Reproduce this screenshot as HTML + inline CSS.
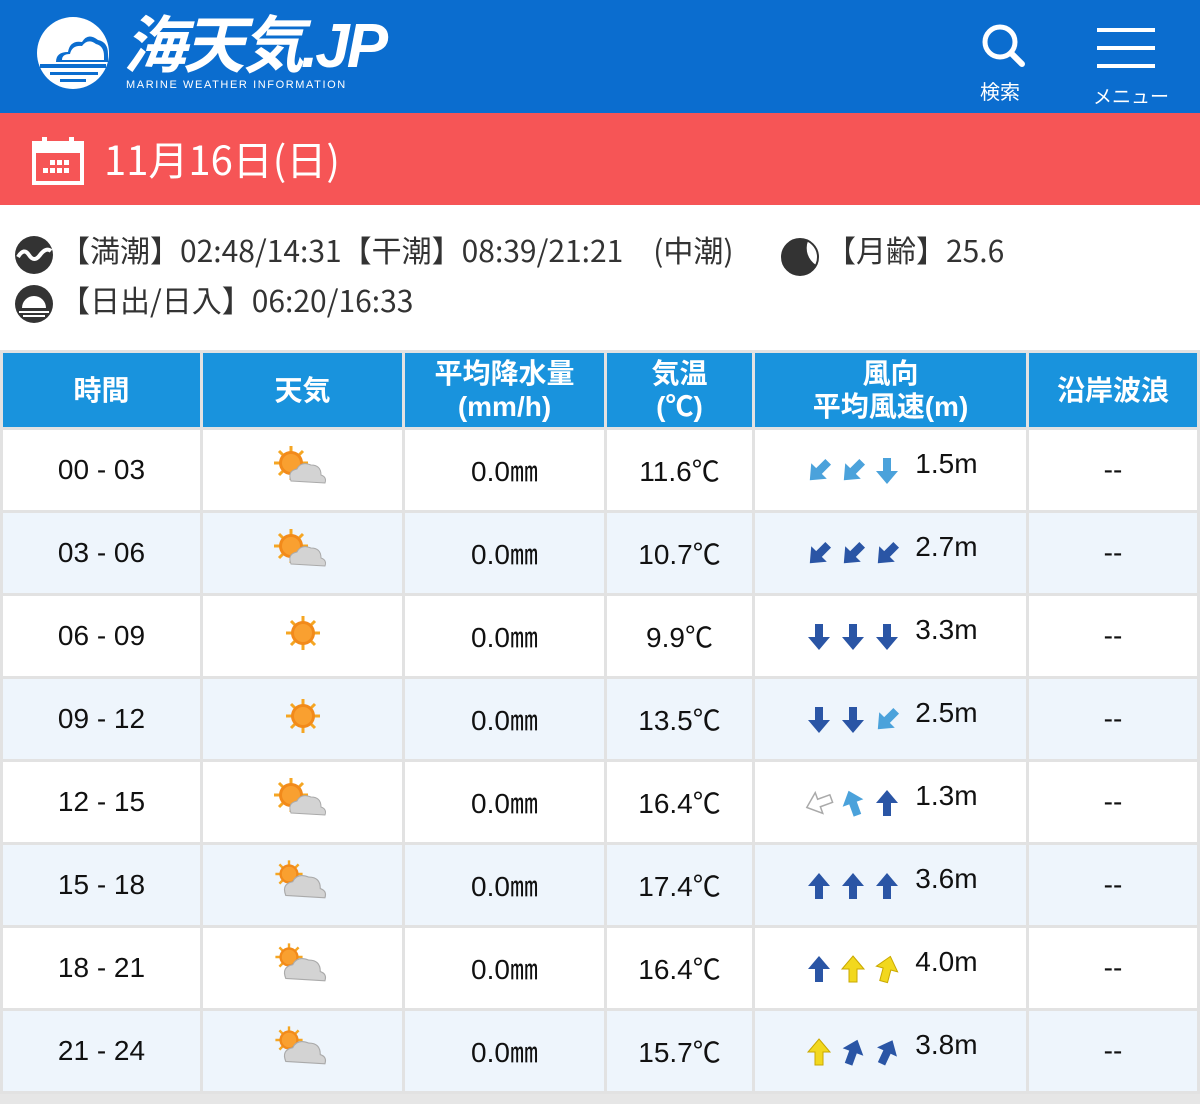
<!DOCTYPE html>
<html><head><meta charset="utf-8"><style>
*{margin:0;padding:0;box-sizing:border-box}
body{width:1200px;height:1104px;background:#e6e6e6;font-family:"Liberation Sans","Noto Sans CJK JP",sans-serif;overflow:hidden;position:relative}
.hdr{position:absolute;left:0;top:0;width:1200px;height:113px;background:#0b6dcf;color:#fff}
.red{position:absolute;left:0;top:113px;width:1200px;height:92px;background:#f65556;color:#fff}
.info{position:absolute;left:0;top:205px;width:1200px;height:147px;background:#fff;font-size:30px;color:#333;font-family:"Noto Sans CJK JP",sans-serif}
table{position:absolute;left:0;top:350px;width:1200px;border-collapse:collapse}
td,th{border:3px solid #e2e2e2;text-align:center;font-size:28px;color:#111;font-weight:normal}
th{background:#1993dd;color:#fff;height:77px;line-height:33px;font-weight:bold;font-size:28px}
td{height:83px}
tr.alt td{background:#eef5fc}
tr.w td{background:#fff}
.ar{display:inline-block;vertical-align:middle}
</style></head><body>
<div class="hdr">
 <svg width="80" height="80" viewBox="0 0 80 80" style="position:absolute;left:36px;top:16px">
  <circle cx="37" cy="37" r="36" fill="#fff"/>
  <path d="M20 46 Q20 36 32 36 Q34 24 46 26 Q52 16 62 24 Q72 26 72 38 L72 46Z" fill="#0b6dcf"/>
  <path d="M26 44 Q26 38 34 38 Q36 29 46 30 Q52 22 60 28 Q68 30 68 40 L68 44Z" fill="#fff"/>
  <rect x="4" y="48" width="66" height="4" fill="#0b6dcf"/><rect x="14" y="56" width="48" height="3" fill="#0b6dcf"/><rect x="24" y="63" width="26" height="3" fill="#0b6dcf"/>
 </svg>
 <div style="position:absolute;left:124px;top:12px;font-size:62px;font-weight:bold;font-style:italic;letter-spacing:-3px;line-height:70px">海天気.JP</div>
 <div style="position:absolute;left:126px;top:79px;font-size:11px;letter-spacing:1.6px">MARINE WEATHER INFORMATION</div>
 <svg width="46" height="46" viewBox="0 0 46 46" style="position:absolute;left:980px;top:22px"><circle cx="20" cy="20" r="15" fill="none" stroke="#fff" stroke-width="5"/><path d="M31 31 L42 42" stroke="#fff" stroke-width="6" stroke-linecap="round"/></svg>
 <div style="position:absolute;left:980px;top:76px;font-size:20px">検索</div>
 <div style="position:absolute;left:1097px;top:28px;width:58px;height:4px;background:#fff"></div>
 <div style="position:absolute;left:1097px;top:46px;width:58px;height:4px;background:#fff"></div>
 <div style="position:absolute;left:1097px;top:64px;width:58px;height:4px;background:#fff"></div>
 <div style="position:absolute;left:1093px;top:82px;font-size:19px">メニュー</div>
</div>
<div class="red">
 <svg width="52" height="50" viewBox="0 0 52 50" style="position:absolute;left:32px;top:22px"><rect x="2" y="8" width="48" height="40" fill="none" stroke="#fff" stroke-width="4"/><rect x="2" y="8" width="48" height="10" fill="#fff"/><rect x="10" y="2" width="5" height="10" fill="#fff"/><rect x="37" y="2" width="5" height="10" fill="#fff"/><g fill="#fff"><rect x="18" y="25" width="5" height="5"/><rect x="25" y="25" width="5" height="5"/><rect x="32" y="25" width="5" height="5"/><rect x="11" y="33" width="5" height="5"/><rect x="18" y="33" width="5" height="5"/><rect x="25" y="33" width="5" height="5"/><rect x="32" y="33" width="5" height="5"/></g></svg>
 <div style="position:absolute;left:104px;top:18px;font-size:40px;line-height:54px;font-family:'Noto Sans CJK JP',sans-serif">11月16日(日)</div>
</div>
<div class="info">
 <svg width="40" height="40" viewBox="0 0 40 40" style="position:absolute;left:14px;top:30px"><circle cx="20" cy="20" r="19" fill="#333"/><path d="M4 22 Q10 12 15 20 T26 20 T37 16" fill="none" stroke="#fff" stroke-width="4"/></svg>
 <div style="position:absolute;left:60px;top:22px">【満潮】02:48/14:31【干潮】08:39/21:21　(中潮)</div>
 <svg width="40" height="40" viewBox="0 0 40 40" style="position:absolute;left:780px;top:32px"><circle cx="20" cy="20" r="18" fill="#fff" stroke="#333" stroke-width="2"/><path d="M28 4 A18 18 0 1 0 36 28 A20 20 0 0 1 28 4Z" fill="#333"/></svg>
 <div style="position:absolute;left:826px;top:22px">【月齢】25.6</div>
 <svg width="40" height="40" viewBox="0 0 40 40" style="position:absolute;left:14px;top:79px"><circle cx="20" cy="20" r="19" fill="#333"/><path d="M8 24 A12 12 0 0 1 32 24Z" fill="#fff"/><path d="M5 28 H35 M9 32 H31" stroke="#fff" stroke-width="2"/></svg>
 <div style="position:absolute;left:60px;top:72px">【日出/日入】06:20/16:33</div>
</div>
<svg width="0" height="0" style="position:absolute"><defs>
<path id="a" d="M0 -13 L11 0 L4 0 L4 13 L-4 13 L-4 0 L-11 0Z"/>
<g id="sun"><g stroke="#f5a623" stroke-width="3"><path d="M0 -17 V17 M-17 0 H17 M-12 -12 L12 12 M-12 12 L12 -12"/></g><circle r="12" fill="#f28a1a"/><circle r="9" fill="#f9a030"/></g>
<g id="cl"><path d="M-8 10 Q-12 0 -2 -2 Q2 -10 12 -6 Q22 -6 22 4 Q28 6 26 12 Z" fill="#d3d3d3" stroke="#aaa" stroke-width="1"/></g>
</defs></svg>
<table>
<tr><th style="width:200px">時間</th><th style="width:202px">天気</th><th style="width:202px">平均降水量<br>(mm/h)</th><th style="width:148px">気温<br>(℃)</th><th style="width:274px">風向<br>平均風速(m)</th><th>沿岸波浪</th></tr>
<tr class="w"><td>00 - 03</td><td><svg width="60" height="44" viewBox="-20 -20 60 44"><use href="#sun" transform="translate(-2,-2)"/><use href="#cl" transform="translate(6,6)"/></svg></td><td>0.0㎜</td><td>11.6℃</td><td><svg class="ar" width="104" height="34" viewBox="0 0 104 34"><use href="#a" fill="#4ba2db" transform="translate(16,18) rotate(225)"/><use href="#a" fill="#4ba2db" transform="translate(50,18) rotate(225)"/><use href="#a" fill="#4ba2db" transform="translate(84,18) rotate(180)"/></svg><span style="vertical-align:middle;position:relative;top:-6px"> 1.5m</span></td><td>--</td></tr>
<tr class="alt"><td>03 - 06</td><td><svg width="60" height="44" viewBox="-20 -20 60 44"><use href="#sun" transform="translate(-2,-2)"/><use href="#cl" transform="translate(6,6)"/></svg></td><td>0.0㎜</td><td>10.7℃</td><td><svg class="ar" width="104" height="34" viewBox="0 0 104 34"><use href="#a" fill="#2a55a5" transform="translate(16,18) rotate(225)"/><use href="#a" fill="#2a55a5" transform="translate(50,18) rotate(225)"/><use href="#a" fill="#2a55a5" transform="translate(84,18) rotate(225)"/></svg><span style="vertical-align:middle;position:relative;top:-6px"> 2.7m</span></td><td>--</td></tr>
<tr class="w"><td>06 - 09</td><td><svg width="44" height="44" viewBox="-22 -22 44 44"><use href="#sun"/></svg></td><td>0.0㎜</td><td>9.9℃</td><td><svg class="ar" width="104" height="34" viewBox="0 0 104 34"><use href="#a" fill="#2a55a5" transform="translate(16,18) rotate(180)"/><use href="#a" fill="#2a55a5" transform="translate(50,18) rotate(180)"/><use href="#a" fill="#2a55a5" transform="translate(84,18) rotate(180)"/></svg><span style="vertical-align:middle;position:relative;top:-6px"> 3.3m</span></td><td>--</td></tr>
<tr class="alt"><td>09 - 12</td><td><svg width="44" height="44" viewBox="-22 -22 44 44"><use href="#sun"/></svg></td><td>0.0㎜</td><td>13.5℃</td><td><svg class="ar" width="104" height="34" viewBox="0 0 104 34"><use href="#a" fill="#2a55a5" transform="translate(16,18) rotate(180)"/><use href="#a" fill="#2a55a5" transform="translate(50,18) rotate(180)"/><use href="#a" fill="#4ba2db" transform="translate(84,18) rotate(225)"/></svg><span style="vertical-align:middle;position:relative;top:-6px"> 2.5m</span></td><td>--</td></tr>
<tr class="w"><td>12 - 15</td><td><svg width="60" height="44" viewBox="-20 -20 60 44"><use href="#sun" transform="translate(-2,-2)"/><use href="#cl" transform="translate(6,6)"/></svg></td><td>0.0㎜</td><td>16.4℃</td><td><svg class="ar" width="104" height="34" viewBox="0 0 104 34"><use href="#a" fill="#fff" stroke="#aaa" stroke-width="1.5" transform="translate(16,18) rotate(-110)"/><use href="#a" fill="#4ba2db" transform="translate(50,18) rotate(-20)"/><use href="#a" fill="#2a55a5" transform="translate(84,18) rotate(0)"/></svg><span style="vertical-align:middle;position:relative;top:-6px"> 1.3m</span></td><td>--</td></tr>
<tr class="alt"><td>15 - 18</td><td><svg width="60" height="44" viewBox="-20 -20 60 44"><use href="#sun" transform="translate(-4,-6) scale(.8)"/><use href="#cl" transform="translate(2,4) scale(1.15)"/></svg></td><td>0.0㎜</td><td>17.4℃</td><td><svg class="ar" width="104" height="34" viewBox="0 0 104 34"><use href="#a" fill="#2a55a5" transform="translate(16,18)"/><use href="#a" fill="#2a55a5" transform="translate(50,18)"/><use href="#a" fill="#2a55a5" transform="translate(84,18)"/></svg><span style="vertical-align:middle;position:relative;top:-6px"> 3.6m</span></td><td>--</td></tr>
<tr class="w"><td>18 - 21</td><td><svg width="60" height="44" viewBox="-20 -20 60 44"><use href="#sun" transform="translate(-4,-6) scale(.8)"/><use href="#cl" transform="translate(2,4) scale(1.15)"/></svg></td><td>0.0㎜</td><td>16.4℃</td><td><svg class="ar" width="104" height="34" viewBox="0 0 104 34"><use href="#a" fill="#2a55a5" transform="translate(16,18)"/><use href="#a" fill="#f2d81e" stroke="#c9a800" transform="translate(50,18)"/><use href="#a" fill="#f2d81e" stroke="#c9a800" transform="translate(84,18) rotate(15)"/></svg><span style="vertical-align:middle;position:relative;top:-6px"> 4.0m</span></td><td>--</td></tr>
<tr class="alt"><td>21 - 24</td><td><svg width="60" height="44" viewBox="-20 -20 60 44"><use href="#sun" transform="translate(-4,-6) scale(.8)"/><use href="#cl" transform="translate(2,4) scale(1.15)"/></svg></td><td>0.0㎜</td><td>15.7℃</td><td><svg class="ar" width="104" height="34" viewBox="0 0 104 34"><use href="#a" fill="#f2d81e" stroke="#c9a800" transform="translate(16,18)"/><use href="#a" fill="#2a55a5" transform="translate(50,18) rotate(20)"/><use href="#a" fill="#2a55a5" transform="translate(84,18) rotate(25)"/></svg><span style="vertical-align:middle;position:relative;top:-6px"> 3.8m</span></td><td>--</td></tr>
</table>
</body></html>
